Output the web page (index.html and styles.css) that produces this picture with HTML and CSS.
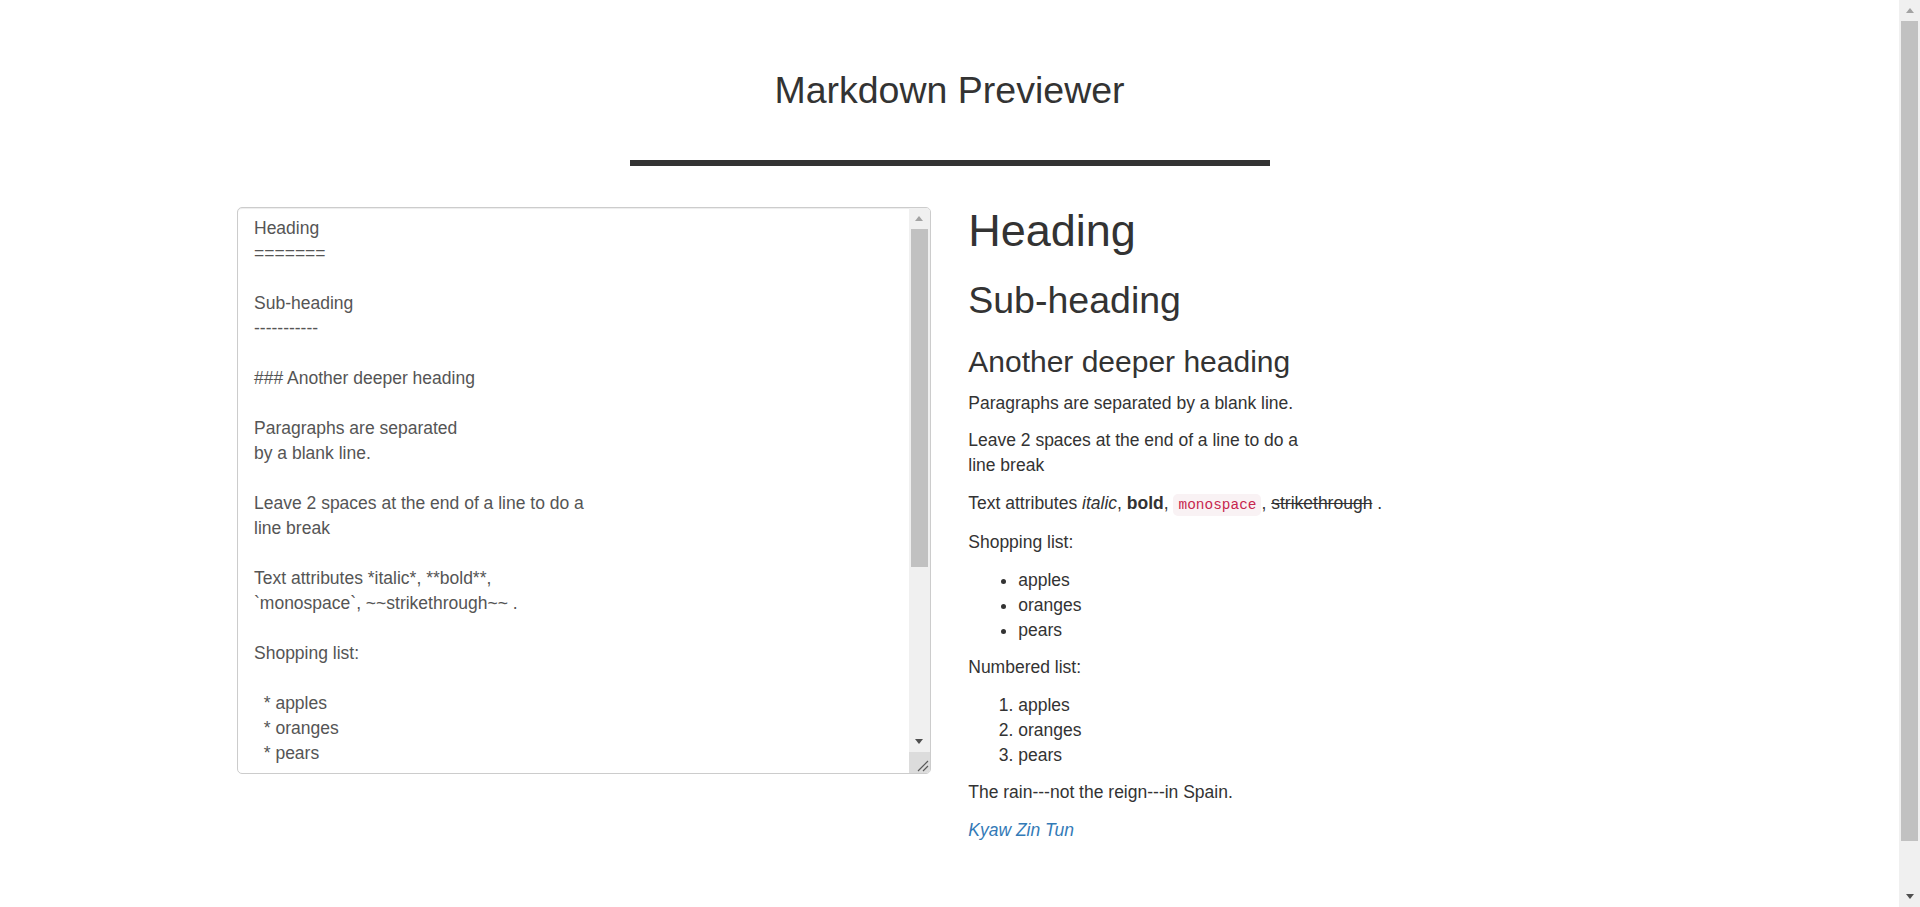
FILE: index.html
```html
<!DOCTYPE html>
<html lang="en">
<head>
<meta charset="utf-8">
<title>Markdown Previewer</title>
<link rel="stylesheet" href="styles.css">
</head>
<body>
<div class="page">
  <div class="container">
    <h2 class="title">Markdown Previewer</h2>
    <div class="title-bar"></div>
    <div class="row">
      <div class="col">
        <div class="editor">
          <textarea class="editor-input" spellcheck="false">Heading
=======

Sub-heading
-----------

### Another deeper heading

Paragraphs are separated
by a blank line.

Leave 2 spaces at the end of a line to do a
line break

Text attributes *italic*, **bold**,
`monospace`, ~~strikethrough~~ .

Shopping list:

  * apples
  * oranges
  * pears

Numbered list:

  1. apples
  2. oranges
  3. pears

The rain---not the reign---in Spain.

 *[Kyaw Zin Tun](https://github.com/kyawzintun)*</textarea>
          <div class="sb sb-small">
            <div class="sb-btn"><span class="arrow-up off"></span></div>
            <div class="sb-track">
              <div class="sb-thumb sb-thumb-small"></div>
            </div>
            <div class="sb-btn"><span class="arrow-down"></span></div>
            <div class="resizer">
              <svg width="21" height="21" viewBox="0 0 21 21"><path d="M19 9 L9 19 M19 14 L14 19" stroke="#5a5a5a" stroke-width="1.2" fill="none"/></svg>
            </div>
          </div>
        </div>
      </div>
      <div class="col preview">
        <h1>Heading</h1>
        <h2>Sub-heading</h2>
        <h3>Another deeper heading</h3>
        <p>Paragraphs are separated by a blank line.</p>
        <p>Leave 2 spaces at the end of a line to do a<br>line break</p>
        <p>Text attributes <em>italic</em>, <strong>bold</strong>, <code>monospace</code>, <del>strikethrough</del> .</p>
        <p>Shopping list:</p>
        <ul>
          <li>apples</li>
          <li>oranges</li>
          <li>pears</li>
        </ul>
        <p>Numbered list:</p>
        <ol>
          <li>apples</li>
          <li>oranges</li>
          <li>pears</li>
        </ol>
        <p>The rain---not the reign---in Spain.</p>
        <p><em><a class="author" href="#">Kyaw Zin Tun</a></em></p>
      </div>
    </div>
  </div>
</div>
<div class="sb sb-page">
  <div class="sb-btn"><span class="arrow-up off"></span></div>
  <div class="sb-track">
    <div class="sb-thumb sb-thumb-page"></div>
  </div>
  <div class="sb-btn"><span class="arrow-down"></span></div>
</div>
</body>
</html>
```

FILE: styles.css
```css
html, body {
  margin: 0;
  padding: 0;
  height: 907px;
  overflow: hidden;
  background: #fff;
}

body {
  display: flex;
  font-family: "Liberation Sans", Arial, Helvetica, sans-serif;
  font-size: 17.5px;
  line-height: 25px;
  color: #333;
}

.page {
  flex: 1;
  min-width: 0;
}

.container {
  width: 1425px;
  margin: 0 auto;
  padding-top: 69.5px;
}

.title {
  margin: 0;
  font-size: 37.5px;
  line-height: 41.25px;
  font-weight: 500;
  text-align: center;
  color: #333;
}

.title-bar {
  width: 640px;
  height: 6px;
  background: #333;
  margin: 49.25px auto 0;
}

.row {
  display: grid;
  grid-template-columns: 1fr 1fr;
  column-gap: 37.5px;
  margin-top: 38px;
  align-items: start;
}

/* editor */
.editor {
  margin-top: 3px;
  height: 567px;
  box-sizing: border-box;
  border: 1px solid #ccc;
  border-radius: 5px;
  box-shadow: inset 0 1px 1px rgba(0, 0, 0, .075);
  display: flex;
  overflow: hidden;
  background: #fff;
}

.editor-input {
  flex: 1;
  min-width: 0;
  border: 0;
  margin: 0;
  padding: 7.5px 16px 0;
  font-family: "Liberation Sans", Arial, Helvetica, sans-serif;
  font-size: 17.5px;
  line-height: 25px;
  color: #555;
  background: transparent;
  resize: none;
  overflow: hidden;
  outline: none;
}

/* scrollbars */
.sb {
  display: flex;
  flex-direction: column;
  background: #f0f0f0;
  width: 21px;
  flex: none;
}

.sb-page {
  height: 907px;
}

.sb-btn {
  height: 21px;
  flex: none;
  display: flex;
  align-items: center;
  justify-content: center;
}

.sb-track {
  flex: 1;
  display: flex;
  flex-direction: column;
  align-items: center;
}

.sb-thumb {
  width: 17px;
  background: #c1c1c1;
}

.sb-thumb-small {
  height: 338px;
}

.sb-thumb-page {
  height: 820px;
}

.arrow-up {
  width: 0;
  height: 0;
  border-left: 4.5px solid transparent;
  border-right: 4.5px solid transparent;
  border-bottom: 5px solid #505050;
}

.arrow-down {
  width: 0;
  height: 0;
  border-left: 4.5px solid transparent;
  border-right: 4.5px solid transparent;
  border-top: 5px solid #505050;
}

.arrow-up.off {
  border-bottom-color: #a3a3a3;
}

.resizer {
  height: 21px;
  flex: none;
  background: #dcdcdc;
  display: flex;
}

/* preview */
.preview {
  padding-top: 2px;
}

.preview h1,
.preview h2,
.preview h3 {
  font-weight: 500;
  color: #333;
}

.preview h1 {
  font-size: 45px;
  line-height: 49.5px;
  margin: 0 0 12.5px;
}

.preview h2 {
  font-size: 37.5px;
  line-height: 41.25px;
  margin: 24px 0 12.5px;
}

.preview h3 {
  font-size: 30px;
  line-height: 33px;
  margin: 24.5px 0 12.5px;
}

.preview p {
  margin: 0 0 12.5px;
}

.preview ul,
.preview ol {
  margin: 0 0 12.5px;
  padding-left: 50px;
}

.preview strong {
  font-weight: 700;
}

.preview code {
  font-family: "Liberation Mono", "DejaVu Sans Mono", monospace;
  font-size: 14.45px;
  color: #c7254e;
  background: #f9f2f4;
  padding: 3px 5px;
  border-radius: 5px;
}

.author {
  color: #337ab7;
  text-decoration: none;
}
```
